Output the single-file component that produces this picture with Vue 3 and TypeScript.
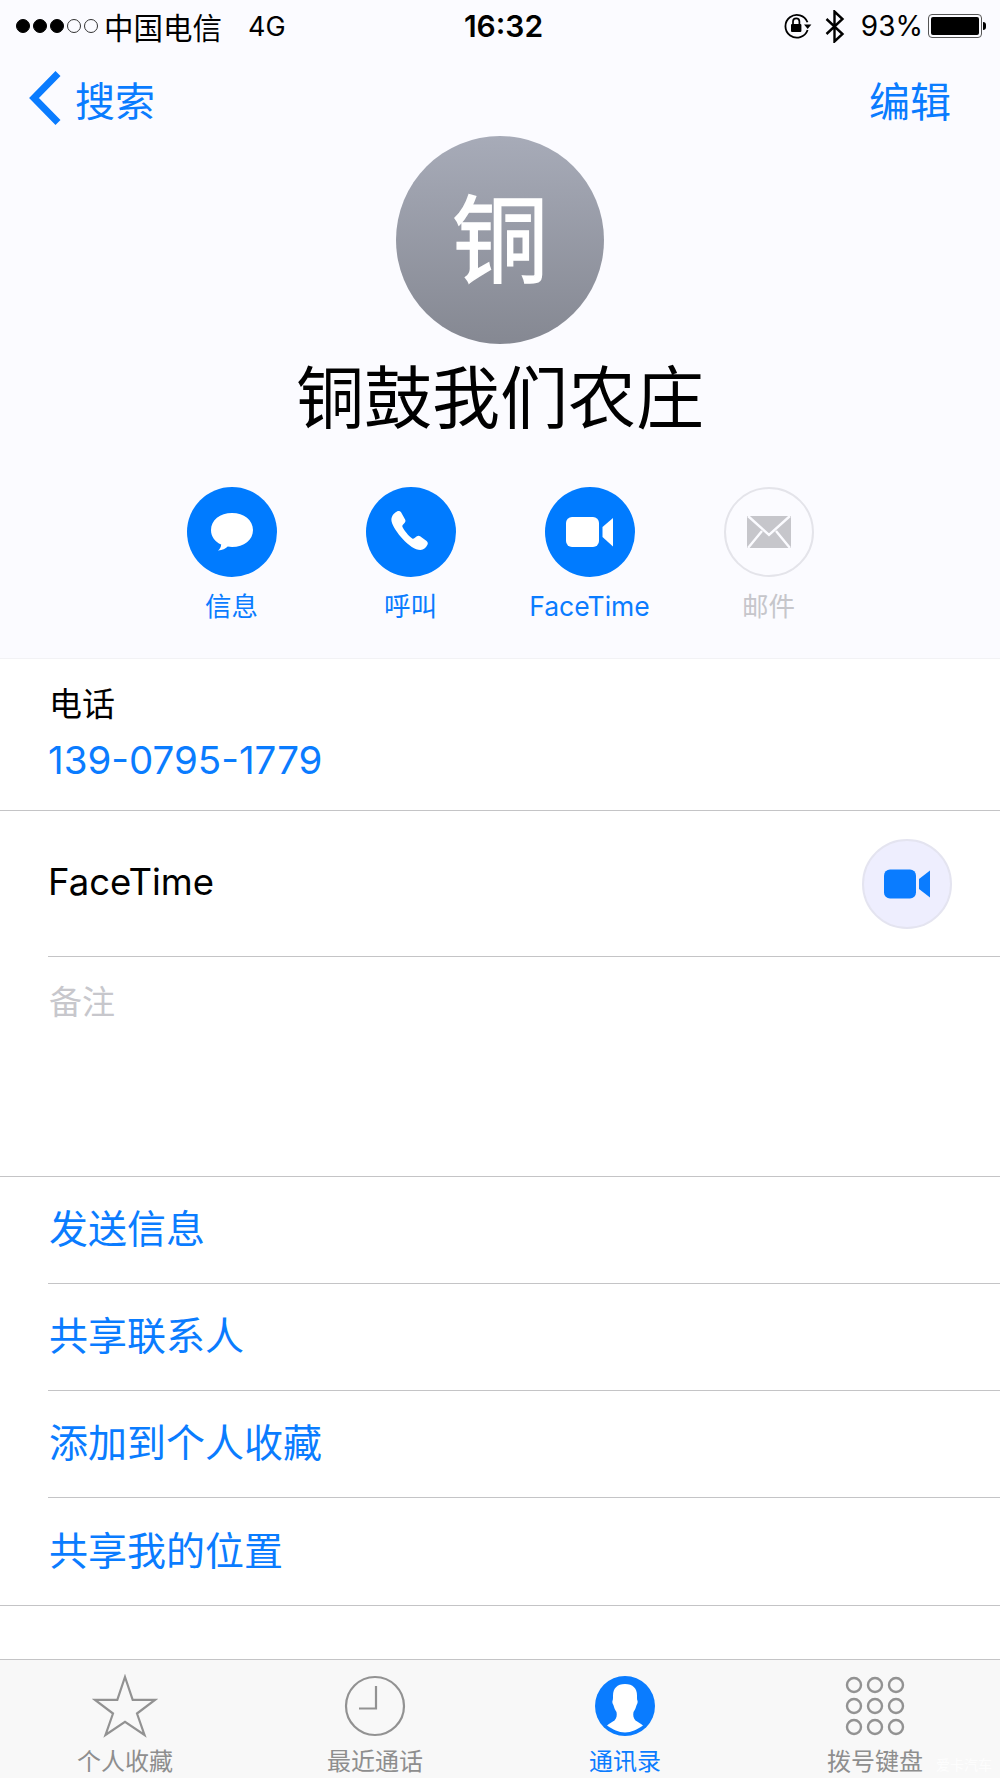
<script setup lang="ts">
const actions = [
  { label: '信息', icon: 'message', off: false },
  { label: '呼叫', icon: 'phone', off: false },
  { label: 'FaceTime', icon: 'video', off: false },
  { label: '邮件', icon: 'mail', off: true },
]

const links = ['发送信息', '共享联系人', '添加到个人收藏', '共享我的位置']

const tabs = [
  { label: '个人收藏', icon: 'star', active: false },
  { label: '最近通话', icon: 'clock', active: false },
  { label: '通讯录', icon: 'contacts', active: true },
  { label: '拨号键盘', icon: 'keypad', active: false },
]

const keypadDots = [0, 1, 2].flatMap(row => [0, 1, 2].map(col => ({ cx: 9 + col * 21, cy: 9 + row * 21 })))
</script>

<template>
  <div class="screen">
    <header class="head">
      <div class="status">
        <div class="status-left">
          <div class="signal">
            <i v-for="n in 3" :key="n" class="dot on"></i>
            <i v-for="n in 2" :key="n" class="dot"></i>
          </div>
          <span class="carrier">中国电信</span>
          <span class="net">4G</span>
        </div>
        <div class="time">16:32</div>
        <div class="status-right">
          <svg class="rotlock" width="30" height="26" viewBox="0 0 30 26">
            <path d="M24.5 9.2A11.4 11.4 0 1 0 24.6 17" fill="none" stroke="#000" stroke-width="1.8" />
            <path d="M21 11.5h7.4l-3.7 4.6z" fill="#000" />
            <rect x="8" y="11" width="10.4" height="8" rx="1" fill="#000" />
            <path d="M10 11V8.6a3.2 3.2 0 0 1 6.4 0V11" fill="none" stroke="#000" stroke-width="1.7" />
          </svg>
          <svg class="bt" width="20" height="33" viewBox="0 0 20 33">
            <path d="M1.5 9l16 15L9.500 31.500V1.500L17.500 9l-16 15" fill="none" stroke="#000" stroke-width="2.400" />
          </svg>
          <span class="pct">93%</span>
          <div class="battery"><div class="battery-fill"></div></div>
          <div class="battery-nub"></div>
        </div>
      </div>

      <nav class="nav">
        <a class="nav-back">
          <svg width="34" height="56" viewBox="0 0 34 56">
            <path d="M30 3.500L6 28l24 24.500" fill="none" stroke="#0a7cff" stroke-width="7" />
          </svg>
          <span>搜索</span>
        </a>
        <a class="nav-edit">编辑</a>
      </nav>

      <div class="avatar">铜</div>
      <h1 class="name">铜鼓我们农庄</h1>

      <div class="actions">
        <div v-for="a in actions" :key="a.label" class="action" :class="{ off: a.off }">
          <div class="action-circle">
            <svg v-if="a.icon === 'message'" width="46" height="46" viewBox="0 0 46 46">
              <path d="M23 4c12 0 21 7 21 17s-9 17-21 17c-1.500 0-3-.1-4.300-.4-2.200 2.400-5.700 4-9.700 3.900 1.800-1.300 3-3.300 3.200-6C6 33 2 27.500 2 21 2 11 11 4 23 4z" fill="#fff" />
            </svg>
            <svg v-else-if="a.icon === 'phone'" width="46" height="46" viewBox="0 0 46 46">
              <path d="M9 2.500c1.500-.9 3.300-.4 4.200 1l3.900 7c.6 1.100.4 2.400-.4 3.300l-2 2.200c-.5.600-.6 1.300-.2 2 1.500 3 5.700 8.700 9.700 11.400.7.400 1.400.4 2-.1l2.700-2c1-.7 2.200-.7 3.200 0l6.500 4.600c1.300 1 1.600 2.800.7 4.200-1.500 2.700-3.700 5-6.800 5C22 41 6 22 3.600 12.500 2.600 8 5.400 4.500 9 2.500z" fill="#fff" />
            </svg>
            <svg v-else-if="a.icon === 'video'" width="50" height="34" viewBox="0 0 50 34">
              <rect x="1" y="2" width="33" height="30" rx="6" fill="#fff" />
              <path d="M48 3v28.500L37.500 22V12z" fill="#fff" />
            </svg>
            <svg v-else width="46" height="34" viewBox="0 0 46 34">
              <rect x="1" y="1" width="44" height="32" fill="#c6c6cb" />
              <path d="M2 1l21 19L44 1M2 33l14-17M44 33L30 16" fill="none" stroke="#fbfbff" stroke-width="2.400" />
            </svg>
          </div>
          <span class="action-label">{{ a.label }}</span>
        </div>
      </div>
    </header>

    <section class="row row-phone">
      <div class="row-title">电话</div>
      <div class="row-number">139-0795-1779</div>
    </section>

    <section class="row-ft">
      <div class="row-ft-inner">
        <span class="row-ft-text">FaceTime</span>
        <div class="ft-btn">
          <svg width="48" height="30" viewBox="0 0 48 30">
            <rect x="1" y="0.500" width="32" height="29" rx="6" fill="#0a7cff" />
            <path d="M47 1.500v27L36 20v-10z" fill="#0a7cff" />
          </svg>
        </div>
      </div>
    </section>

    <section class="notes">备注</section>

    <section class="links">
      <a v-for="l in links" :key="l" class="link">{{ l }}</a>
    </section>

    <div class="spacer"></div>

    <footer class="tabs">
      <div v-for="t in tabs" :key="t.label" class="tab" :class="{ active: t.active }">
        <div class="tab-icon">
          <svg v-if="t.icon === 'star'" width="66" height="64" viewBox="0 0 66 64">
            <path d="M33 3l7.700 22.800H63L45 39.500 52.500 61 33 47.800 13.500 61 21 39.500 3 25.800h22.300z" fill="none" stroke="#929292" stroke-width="2.200" />
          </svg>
          <svg v-else-if="t.icon === 'clock'" width="62" height="62" viewBox="0 0 62 62">
            <circle cx="31" cy="31" r="29" fill="none" stroke="#929292" stroke-width="2.200" />
            <path d="M32 11v22.500H15" fill="none" stroke="#929292" stroke-width="2.200" />
          </svg>
          <svg v-else-if="t.icon === 'contacts'" width="62" height="62" viewBox="0 0 62 62">
            <circle cx="31" cy="31" r="30" fill="#0a7cff" />
            <path d="M31 9c8 0 12 4.500 12 11.500 0 2.500 0 4 .4 5 .5.800.3 3-.8 4.500-.8 3-1.800 5-3.100 7-.6 3-.3 6 2 8.500 2 1.500 5 2.500 7.500 5C43 54.500 37.500 57.500 31 57.500S19 54.500 13 50.500c2.500-2.500 5.500-3.500 7.500-5 2.300-2.500 2.600-5.500 2-8.500-1.300-2-2.300-4-3.100-7-1.100-1.500-1.300-3.700-.8-4.500.4-1 .4-2.500.4-5C19 13.500 23 9 31 9z" fill="#fff" />
          </svg>
          <svg v-else width="60" height="60" viewBox="0 0 60 60">
            <circle v-for="(d, i) in keypadDots" :key="i" :cx="d.cx" :cy="d.cy" r="7" fill="none" stroke="#929292" stroke-width="2.400" />
          </svg>
        </div>
        <span class="tab-label">{{ t.label }}</span>
      </div>
      <span class="mark">爱卡汽车</span>
    </footer>
  </div>
</template>

<style>
html,
body {
  margin: 0;
  background: #fff;
}
</style>

<style scoped>
.screen {
  width: 1000px;
  height: 1778px;
  display: flex;
  flex-direction: column;
  overflow: hidden;
  background: #fff;
  color: #000;
  font-family: Inter, 'Noto Sans CJK SC', sans-serif;
}

.head {
  height: 658px;
  flex: none;
  background: #fbfbff;
  display: flex;
  flex-direction: column;
  align-items: center;
}

.status {
  align-self: stretch;
  height: 52px;
  display: grid;
  grid-template-columns: 1fr auto 1fr;
  align-items: center;
}

.status-left {
  display: flex;
  align-items: center;
  padding-left: 16px;
}

.signal {
  display: flex;
  gap: 3px;
  margin-right: 6px;
}

.dot {
  width: 14px;
  height: 14px;
  border-radius: 50%;
  box-sizing: border-box;
  border: 1px solid #333;
}

.dot.on {
  background: #000;
  border-color: #000;
}

.carrier {
  font-size: 29.500px;
}

.net {
  font-size: 27px;
  margin-left: 26px;
}

.time {
  font-size: 30px;
  font-weight: 600;
  padding-left: 7px;
}

.status-right {
  display: flex;
  align-items: center;
  justify-content: flex-end;
  padding-right: 14px;
}

.rotlock {
  margin-right: 12px;
}

.bt {
  margin-right: 16px;
}

.pct {
  font-size: 28px;
  margin-right: 5px;
}

.battery {
  width: 54px;
  height: 24px;
  box-sizing: border-box;
  border: 1px solid #555;
  border-radius: 4px;
  padding: 2px;
}

.battery-fill {
  height: 100%;
  background: #000;
  border-radius: 2px;
}

.battery-nub {
  width: 3px;
  height: 8px;
  margin-left: 1px;
  background: #000;
  border-radius: 0 3px 3px 0;
}

.nav {
  align-self: stretch;
  height: 84px;
  padding: 0 49px 0 28px;
  display: flex;
  align-items: center;
  justify-content: space-between;
  color: #0a7cff;
  font-size: 40px;
}

.nav-back {
  display: flex;
  align-items: center;
  gap: 13px;
}

.nav-back svg {
  margin-top: 7px;
}

.nav-back span,
.nav-edit {
  padding-top: 9px;
}

.nav-edit {
  font-size: 41px;
}

.avatar {
  width: 208px;
  height: 208px;
  box-sizing: border-box;
  padding-bottom: 14px;
  border-radius: 50%;
  background: linear-gradient(#a7abb8, #858892);
  color: #fff;
  font-size: 96px;
  font-weight: 400;
  -webkit-text-stroke: 1.500px #fff;
  display: flex;
  align-items: center;
  justify-content: center;
}

.name {
  margin: 14px 0 0;
  font-size: 68px;
  font-weight: 400;
  line-height: 80px;
}

.actions {
  margin-top: 49px;
  display: flex;
  gap: 89px;
}

.action {
  width: 90px;
  display: flex;
  flex-direction: column;
  align-items: center;
  color: #0a7cff;
}

.action-circle {
  width: 90px;
  height: 90px;
  flex: none;
  box-sizing: border-box;
  border-radius: 50%;
  background: #007bff;
  display: flex;
  align-items: center;
  justify-content: center;
}

.action.off {
  color: #c6c6cb;
}

.action.off .action-circle {
  background: transparent;
  border: 2px solid #e4e4ea;
}

.action-label {
  margin-top: 11px;
  font-size: 26.500px;
  line-height: 36px;
  white-space: nowrap;
}

.row-phone {
  height: 153px;
  flex: none;
  box-sizing: border-box;
  padding: 22px 0 0 48px;
  border-top: 1px solid #f2f2f5;
  border-bottom: 1px solid #c4c4c6;
}

.row-title {
  font-size: 33px;
  line-height: 46px;
  text-indent: 1px;
}

.row-number {
  margin-top: 8px;
  font-size: 38.500px;
  line-height: 50px;
  color: #0a7cff;
}

.row-ft {
  height: 146px;
  flex: none;
  padding-left: 48px;
}

.row-ft-inner {
  height: 100%;
  box-sizing: border-box;
  border-bottom: 1px solid #c4c4c6;
  display: flex;
  align-items: center;
  justify-content: space-between;
  padding-right: 48px;
}

.row-ft-text {
  font-size: 36.500px;
  padding-bottom: 4px;
}

.ft-btn {
  width: 90px;
  height: 90px;
  box-sizing: border-box;
  border-radius: 50%;
  background: #eeeefe;
  border: 2px solid #e4e4f0;
  display: flex;
  align-items: center;
  justify-content: center;
}

.notes {
  height: 220px;
  flex: none;
  box-sizing: border-box;
  padding: 21px 0 0 48px;
  border-bottom: 1px solid #c4c4c6;
  font-size: 33px;
  line-height: 48px;
  text-indent: 1px;
  color: #c7c7cc;
}

.links {
  flex: none;
  padding-left: 48px;
  border-bottom: 1px solid #c4c4c6;
}

.link {
  display: flex;
  align-items: center;
  height: 107px;
  box-sizing: border-box;
  padding: 0 0 8px 1px;
  font-size: 39px;
  color: #0a7cff;
  border-bottom: 1px solid #c4c4c6;
}

.link:last-child {
  border-bottom: none;
}

.spacer {
  flex: 1;
}

.tabs {
  position: relative;
  height: 119px;
  flex: none;
  box-sizing: border-box;
  border-top: 1px solid #c4c4c6;
  background: #f8f8f8;
  display: grid;
  grid-template-columns: repeat(4, 1fr);
}

.tab {
  display: flex;
  flex-direction: column;
  align-items: center;
  color: #8e8e8e;
}

.tab.active {
  color: #0a7cff;
}

.tab-icon {
  height: 66px;
  margin-top: 13px;
  display: flex;
  align-items: center;
  justify-content: center;
}

.tab-label {
  font-size: 24px;
  line-height: 36px;
  margin-top: 5px;
}

.mark {
  position: absolute;
  right: 8px;
  bottom: 4px;
  font-size: 14px;
  line-height: 18px;
  color: rgba(255, 255, 255, 0.85);
}
</style>
